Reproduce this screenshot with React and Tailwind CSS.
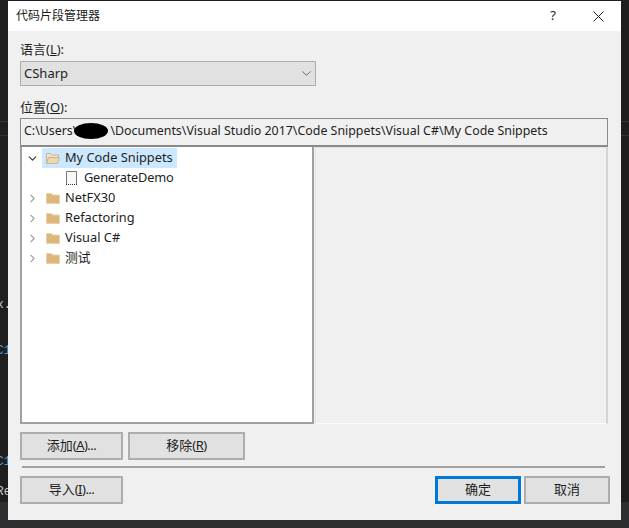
import React from 'react';
import { ChevronDown, ChevronRight } from 'lucide-react';

const FONT = "font-['Noto_Sans','Noto_Sans_CJK_SC',sans-serif]";

// closed folder in the tree
const Folder = () => (
  <svg width="16" height="16" viewBox="0 0 16 16" className="shrink-0">
    <path d="M1.5 3.5h5l1 1.5h7v8.5h-13z" fill="#dcb67a" stroke="#e8d2a8" />
  </svg>
);

const OpenFolder = () => (
  <svg width="16" height="16" viewBox="0 0 16 16" className="shrink-0">
    <path d="M1.5 13.5v-10h4l1 1.5h7v2" fill="#f2e3c6" stroke="#c9b48c" />
    <path d="M1.5 13.5l2-6h11l-2 6z" fill="#ecd9b4" stroke="#c9b48c" />
  </svg>
);

const SnippetIcon = () => (
  <svg width="12" height="14" viewBox="0 0 12 14" className="mr-[3px] shrink-0">
    <path d="M1.5 13V.5h10V13" fill="#f8f8f8" stroke="#777777" />
    <path d="M1 13.5h11" stroke="#333333" strokeDasharray="1 1" />
  </svg>
);

const TreeRow = ({ label, open, selected, child, icon }) => (
  <div className={`flex h-5 items-center ${child ? 'pl-[43px]' : ''}`}>
    {!child && (
      <span className="flex w-[20px] shrink-0 justify-center pl-px">
        {open ? (
          <ChevronDown size={13} strokeWidth={2.4} className="text-[#444444]" />
        ) : (
          <ChevronRight size={13} strokeWidth={2} className="text-[#a0a0a0]" />
        )}
      </span>
    )}
    <div className={`flex h-5 items-center gap-[4px] pr-[4px] ${child ? '' : 'pl-[3px]'} ${selected ? 'bg-[#cce8ff]' : ''}`}>
      {icon}
      <span className={`pb-[2px] text-[12.8px] leading-[18px] text-[#1e1e1e] ${child ? 'tracking-[-0.2px]' : ''}`}>{label}</span>
    </div>
  </div>
);

const Btn = ({ children, className = '' }) => (
  <button className={`flex h-7 items-center justify-center border-2 border-[#adadad] bg-[#e1e1e1] text-[13px] text-[#1e1e1e] ${className}`}>
    {children}
  </button>
);

export default function App() {
  return (
    <div className={`relative flex h-[528px] w-[629px] flex-col overflow-hidden bg-[#2d2d30] ${FONT}`}>
      {/* editor behind the dialog */}
      <div className="flex h-[502px] shrink-0 justify-between bg-[#1e1e1e] font-['Liberation_Mono',monospace] text-[12px] leading-4">
        <div className="flex w-2 flex-col items-end overflow-hidden whitespace-nowrap">
          <div className="mt-[121px] h-px w-full shrink-0 bg-[#333333]" />
          <div className="mt-[13px] h-px w-full shrink-0 bg-[#333333]" />
          <span className="-mr-[3px] mt-[161px] text-[#c8c8c8]">x.</span>
          <span className="-mr-[3px] mt-[30px] text-[#569cd6]">C1</span>
          <span className="-mr-[3px] mt-[95px] text-[#569cd6]">C1</span>
          <span className="-mr-[3px] mt-[14px] text-[#c8c8c8]">Re</span>
        </div>
        <div className="flex w-2 flex-col">
          <div className="mt-[121px] h-px w-full bg-[#333333]" />
          <div className="mt-[13px] h-px w-full bg-[#333333]" />
        </div>
      </div>

      {/* dialog */}
      <div className="absolute left-2 top-px flex h-[519px] w-[613px] flex-col bg-[#f0f0f0]">
        <div className="flex h-[30px] shrink-0 items-center justify-between bg-white pl-2">
          <span className="text-[12px] text-[#1a1a1a]">代码片段管理器</span>
          <div className="flex items-center gap-[37px] pr-[17px]">
            <span className="text-[13px] text-[#222222]">?</span>
            <svg width="11" height="11" viewBox="0 0 11 11">
              <path d="M.5.5l10 10M10.5.5l-10 10" stroke="#222222" fill="none" />
            </svg>
          </div>
        </div>

        <div className="flex flex-1 flex-col pl-3 pr-[13px] pt-2">
          <div className="h-5 text-[13px] leading-5 text-[#1e1e1e]">语言(<u>L</u>):</div>
          <div className="mt-[2px] flex h-[25px] w-[296px] items-center justify-between border border-[#adadad] bg-[#e1e1e1] pl-[3px] pr-px text-[13px] text-[#1e1e1e]">
            CSharp
            <ChevronDown size={15} strokeWidth={1.2} className="text-[#444444]" />
          </div>

          <div className="mt-[11px] h-5 text-[13px] leading-5 text-[#1e1e1e]">位置(<u>O</u>):</div>
          <div className="relative mt-[1px] flex h-[29px] items-center whitespace-pre border border-b-2 border-[#8a8a8a] bg-[#f0f0f0] pb-px pl-[3px] text-[12.4px] text-[#1e1e1e]">
            C:\Users\<span className="inline-block w-[33px]" />\Documents\Visual Studio 2017\Code Snippets\Visual C#\My Code Snippets
            <span className="absolute left-[53px] top-[4px] h-[16px] w-[34px] rounded-[50%] bg-black" />
          </div>

          <div className="flex h-[277px] gap-px">
            <div className="w-[294px] border-2 border-t-0 border-[#a0a0a0] bg-white pt-px">
              <TreeRow label="My Code Snippets" open selected icon={<OpenFolder />} />
              <TreeRow label="GenerateDemo" child icon={<SnippetIcon />} />
              <TreeRow label="NetFX30" icon={<Folder />} />
              <TreeRow label="Refactoring" icon={<Folder />} />
              <TreeRow label="Visual C#" icon={<Folder />} />
              <TreeRow label="测试" icon={<Folder />} />
            </div>
            <div className="flex-1 border border-r-2 border-[#e3e3e3] border-r-[#d4d4d4] border-b-[#fafafa] bg-[#f0f0f0]" />
          </div>

          <div className="mt-2 flex gap-[5px]">
            <Btn className="w-[103px]">添加<span className="tracking-[-0.5px]">(<u>A</u>)...</span></Btn>
            <Btn className="w-[117px]">移除<span className="tracking-[-0.5px]">(<u>R</u>)</span></Btn>
          </div>

          <div className="ml-[2px] mr-[3px] mt-[6px] h-[2px] bg-[#a0a0a0]" />

          <div className="-mr-[2px] mt-2 flex items-center justify-between">
            <Btn className="w-[103px]">导入<span className="tracking-[-0.5px]">(<u>I</u>)...</span></Btn>
            <div className="flex gap-[3px]">
              <Btn className="w-[86px] !border-[3px] !border-[#0078d7]">确定</Btn>
              <Btn className="w-[86px]">取消</Btn>
            </div>
          </div>
        </div>
      </div>
    </div>
  );
}
